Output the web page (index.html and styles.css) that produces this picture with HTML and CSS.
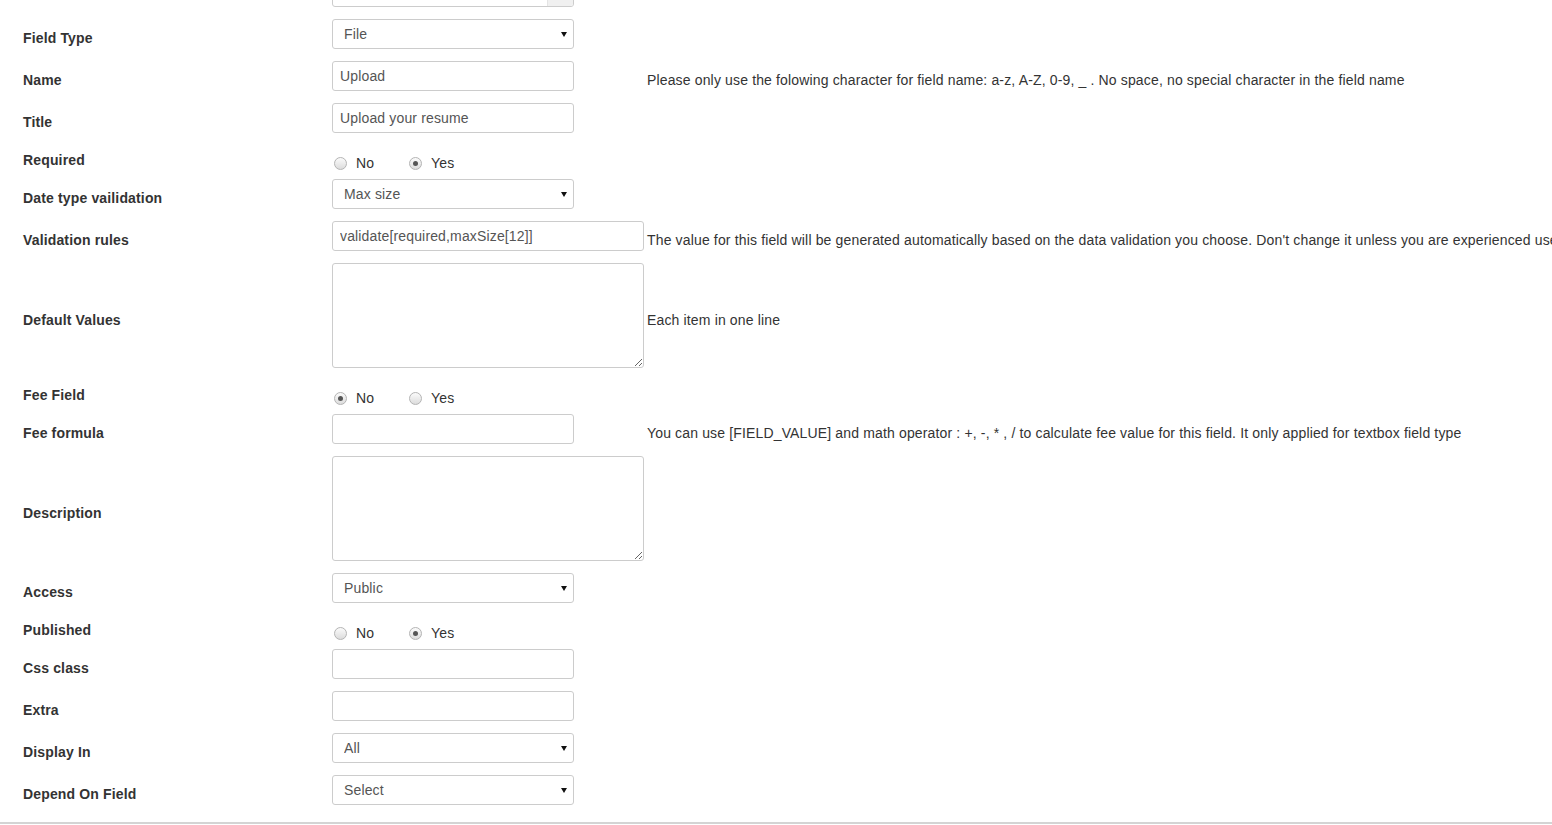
FILE: index.html
```html
<!DOCTYPE html>
<html>
<head>
  <meta charset="UTF-8">
  <title>Edit Field</title>
  <link rel="stylesheet" href="styles.css">
</head>
<body>
  <div class="field-form">
    <div class="row">
      <div class="label"></div>
      <div class="control">
        <div class="multi">
          <span class="multi-text">You should choose one option</span>
          <span class="multi-bar"></span>
        </div>
      </div>
      <div class="help"></div>
    </div>

    <div class="row">
      <div class="label">Field Type</div>
      <div class="control">
        <div class="select"><select><option>File</option></select></div>
      </div>
      <div class="help"></div>
    </div>

    <div class="row">
      <div class="label">Name</div>
      <div class="control"><input type="text" class="input" value="Upload"></div>
      <div class="help">Please only use the folowing character for field name: a-z, A-Z, 0-9, _ . No space, no special character in the field name</div>
    </div>

    <div class="row">
      <div class="label">Title</div>
      <div class="control"><input type="text" class="input" value="Upload your resume"></div>
      <div class="help"></div>
    </div>

    <div class="row row-radio">
      <div class="label">Required</div>
      <div class="control radios">
        <span class="opt"><span class="radio"></span>No</span>
        <span class="opt"><span class="radio checked"></span>Yes</span>
      </div>
      <div class="help"></div>
    </div>

    <div class="row">
      <div class="label">Date type vailidation</div>
      <div class="control">
        <div class="select"><select><option>Max size</option></select></div>
      </div>
      <div class="help"></div>
    </div>

    <div class="row">
      <div class="label">Validation rules</div>
      <div class="control"><input type="text" class="input wide" value="validate[required,maxSize[12]]"></div>
      <div class="help">The value for this field will be generated automatically based on the data validation you choose. Don't change it unless you are experienced user</div>
    </div>

    <div class="row">
      <div class="label">Default Values</div>
      <div class="control"><textarea class="area"></textarea></div>
      <div class="help">Each item in one line</div>
    </div>

    <div class="row row-radio">
      <div class="label">Fee Field</div>
      <div class="control radios">
        <span class="opt"><span class="radio checked"></span>No</span>
        <span class="opt"><span class="radio"></span>Yes</span>
      </div>
      <div class="help"></div>
    </div>

    <div class="row">
      <div class="label">Fee formula</div>
      <div class="control"><input type="text" class="input"></div>
      <div class="help">You can use [FIELD_VALUE] and math operator : +, -, * , / to calculate fee value for this field. It only applied for textbox field type</div>
    </div>

    <div class="row">
      <div class="label">Description</div>
      <div class="control"><textarea class="area"></textarea></div>
      <div class="help"></div>
    </div>

    <div class="row">
      <div class="label">Access</div>
      <div class="control">
        <div class="select"><select><option>Public</option></select></div>
      </div>
      <div class="help"></div>
    </div>

    <div class="row row-radio">
      <div class="label">Published</div>
      <div class="control radios">
        <span class="opt"><span class="radio"></span>No</span>
        <span class="opt"><span class="radio checked"></span>Yes</span>
      </div>
      <div class="help"></div>
    </div>

    <div class="row">
      <div class="label">Css class</div>
      <div class="control"><input type="text" class="input"></div>
      <div class="help"></div>
    </div>

    <div class="row">
      <div class="label">Extra</div>
      <div class="control"><input type="text" class="input"></div>
      <div class="help"></div>
    </div>

    <div class="row">
      <div class="label">Display In</div>
      <div class="control">
        <div class="select"><select><option>All</option></select></div>
      </div>
      <div class="help"></div>
    </div>

    <div class="row">
      <div class="label">Depend On Field</div>
      <div class="control">
        <div class="select"><select><option>Select</option></select></div>
      </div>
      <div class="help"></div>
    </div>
  </div>
  <div class="form-footer"></div>
</body>
</html>
```

FILE: styles.css
```css
html, body {
  overflow: hidden;
}

body {
  margin: 0;
  background: #fff;
  font-family: "Liberation Sans", Arial, sans-serif;
  font-size: 14px;
  letter-spacing: 0.15px;
  color: #333;
}

.field-form {
  margin-top: -29px;
  padding-left: 23px;
}

.row {
  display: grid;
  grid-template-columns: 306px 312px auto;
  column-gap: 3px;
  align-items: center;
  padding: 6px 0;
}

.row-radio {
  grid-template-rows: 22px;
}

.label {
  font-weight: bold;
  padding-top: 8px;
  line-height: 18px;
}

.control {
  display: flex;
}

.help {
  white-space: nowrap;
  padding-top: 8px;
  line-height: 18px;
}

.row-radio .help {
  padding-top: 0;
}

.input {
  box-sizing: border-box;
  width: 242px;
  height: 30px;
  margin: 0;
  padding: 4px 7px;
  border: 1px solid #ccc;
  border-radius: 3px;
  font-family: inherit;
  font-size: 14px;
  letter-spacing: 0.15px;
  color: #555;
  background: #fff;
  outline: none;
}

.input.wide {
  width: 312px;
}

.area {
  box-sizing: border-box;
  display: block;
  width: 312px;
  height: 105px;
  margin: 0;
  padding: 4px 7px;
  border: 1px solid #ccc;
  border-radius: 3px;
  font-family: inherit;
  font-size: 14px;
  color: #555;
}

.select {
  position: relative;
  width: 242px;
}

.select select {
  -webkit-appearance: none;
  appearance: none;
  box-sizing: border-box;
  width: 242px;
  height: 30px;
  margin: 0;
  padding: 0 24px 0 11px;
  border: 1px solid #ccc;
  border-radius: 3px;
  background: #fff;
  font-family: inherit;
  font-size: 14px;
  letter-spacing: 0.15px;
  color: #555;
  outline: none;
}

.select::after {
  content: "";
  position: absolute;
  right: 7px;
  top: 13px;
  border-left: 3px solid transparent;
  border-right: 3px solid transparent;
  border-top: 5px solid #111;
}

.multi {
  box-sizing: border-box;
  display: flex;
  width: 242px;
  height: 30px;
  border: 1px solid #ccc;
  border-radius: 3px;
  overflow: hidden;
}

.multi-text {
  flex: 1;
  padding: 25px 0 0 11px;
  color: #777;
  line-height: 18px;
}

.multi-bar {
  width: 25px;
  background: #f0f0f0;
  border-left: 1px solid #e4e4e4;
}

.radios {
  box-sizing: border-box;
  height: 22px;
  padding-top: 14px;
  padding-left: 2px;
  align-items: center;
  color: #333;
}

.opt {
  display: flex;
  align-items: center;
  flex: none;
  width: 75px;
  height: 18px;
  line-height: 18px;
}

.radio {
  box-sizing: border-box;
  width: 13px;
  height: 13px;
  margin-right: 9px;
  border: 1px solid #b4b4b4;
  border-radius: 50%;
  background: linear-gradient(#fbfbfb, #dcdcdc);
  position: relative;
}

.radio.checked::after {
  content: "";
  position: absolute;
  left: 3px;
  top: 3px;
  width: 5px;
  height: 5px;
  border-radius: 50%;
  background: #555;
}

.form-footer {
  margin-top: 11px;
  border-top: 2px solid #d4d4d4;
  height: 10px;
}
```
